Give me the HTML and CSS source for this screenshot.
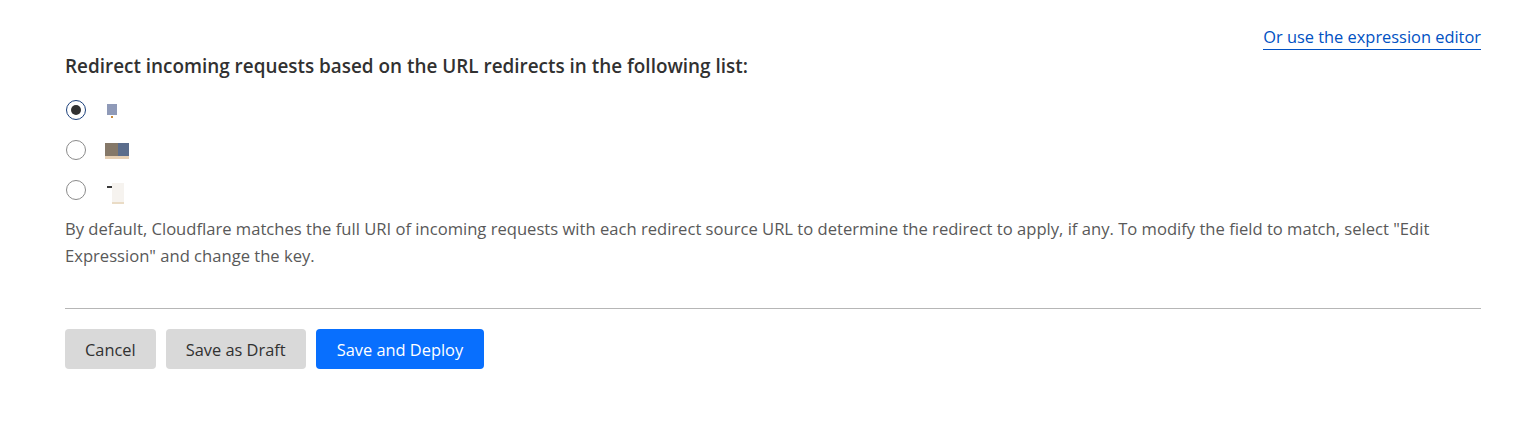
FILE: index.html
```html
<!DOCTYPE html>
<html>
<head>
<meta charset="utf-8">
<link rel="stylesheet" href="styles.css">
</head>
<body>
<div class="panel">
  <div class="top-row">
    <a class="expr-link" href="#">Or use the expression editor</a>
  </div>
  <h3 class="heading">Redirect incoming requests based on the URL redirects in the following list:</h3>
  <div class="radios">
    <label class="radio-row">
      <span class="radio checked"></span>
      <span class="thumb thumb-a"><span class="dot"></span></span>
    </label>
    <label class="radio-row">
      <span class="radio"></span>
      <span class="thumb thumb-b"><span class="b-left"></span><span class="b-right"></span></span>
    </label>
    <label class="radio-row">
      <span class="radio"></span>
      <span class="thumb thumb-c"><span class="c-dash"></span><span class="c-box"></span></span>
    </label>
  </div>
  <p class="desc">By default, Cloudflare matches the full URI of incoming requests with each redirect source URL to determine the redirect to apply, if any. To modify the field to match, select "Edit Expression" and change the key.</p>
  <hr class="divider">
  <div class="actions">
    <button class="btn btn-gray">Cancel</button>
    <button class="btn btn-gray">Save as Draft</button>
    <button class="btn btn-blue">Save and Deploy</button>
  </div>
</div>
</body>
</html>
```

FILE: styles.css
```css
html, body {
  margin: 0;
  padding: 0;
  background: #fff;
}
body {
  font-family: "Open Sans", "Noto Sans", sans-serif;
  color: #313131;
}
.panel {
  width: 1416px;
  margin-left: 65px;
  padding-top: 26px;
}
.top-row {
  display: flex;
  justify-content: flex-end;
  height: 24px;
}
.expr-link {
  color: #0051c3;
  font-size: 16.4px;
  text-decoration: none;
  border-bottom: 1px solid #0051c3;
  line-height: 22px;
  height: 23px;
}
.heading {
  margin: 2px 0 0;
  font-size: 18.9px;
  font-weight: 600;
  line-height: 28px;
  color: #313131;
}
.radios {
  display: flex;
  flex-direction: column;
  gap: 20px;
  margin-top: 20px;
}
.radio-row {
  display: flex;
  align-items: center;
  height: 20px;
  gap: 19px;
}
.radio {
  width: 18px;
  height: 18px;
  border: 1px solid #8a8a8a;
  border-radius: 50%;
  box-sizing: content-box;
  display: flex;
  align-items: center;
  justify-content: center;
  margin-left: 1px;
}
.radio.checked {
  border-color: #1b3f7a;
}
.radio.checked::after {
  content: "";
  width: 10px;
  height: 10px;
  border-radius: 50%;
  background: #313131;
}
.thumb {
  display: flex;
  position: relative;
}
.thumb-a {
  width: 10px;
  height: 11px;
  background: #8f9ab8;
  margin-left: 2px;
  margin-top: -2px;
}
.thumb-a .dot {
  position: absolute;
  left: 4px;
  bottom: -3px;
  width: 2px;
  height: 2px;
  background: #c98a3a;
}
.thumb-b {
  width: 24px;
  flex-direction: row;
  border-bottom: 3px solid #e6cfb3;
  height: 13px;
  margin-top: 2px;
}
.b-left {
  width: 13px;
  background: #857868;
}
.b-right {
  width: 11px;
  background: #5b6d8c;
}
.thumb-c {
  width: 26px;
  height: 20px;
  margin-left: -4px;
  margin-top: 4px;
}
.c-dash {
  position: absolute;
  left: 6px;
  top: 4px;
  width: 5px;
  height: 2px;
  background: #3a3a3a;
}
.c-box {
  position: absolute;
  left: 11px;
  top: 1px;
  width: 12px;
  height: 19px;
  background: #f6f3ef;
  border-bottom: 2px solid #eadcc6;
}
.desc {
  margin: 15px 0 0;
  font-size: 16.6px;
  line-height: 27px;
  color: #595959;
}
.divider {
  border: 0;
  border-top: 1px solid #b6b6b6;
  margin: 39px 0 20px;
  height: 0;
}
.actions {
  display: flex;
  gap: 10px;
}
.btn {
  font-family: inherit;
  font-size: 16.4px;
  height: 40px;
  border: 0;
  border-radius: 4px;
  padding: 0 20px;
  cursor: pointer;
}
.btn-gray {
  background: #d9d9d9;
  color: #313131;
}
.btn-blue {
  background: #086ffe;
  color: #fff;
  padding: 0 21px;
}
```
